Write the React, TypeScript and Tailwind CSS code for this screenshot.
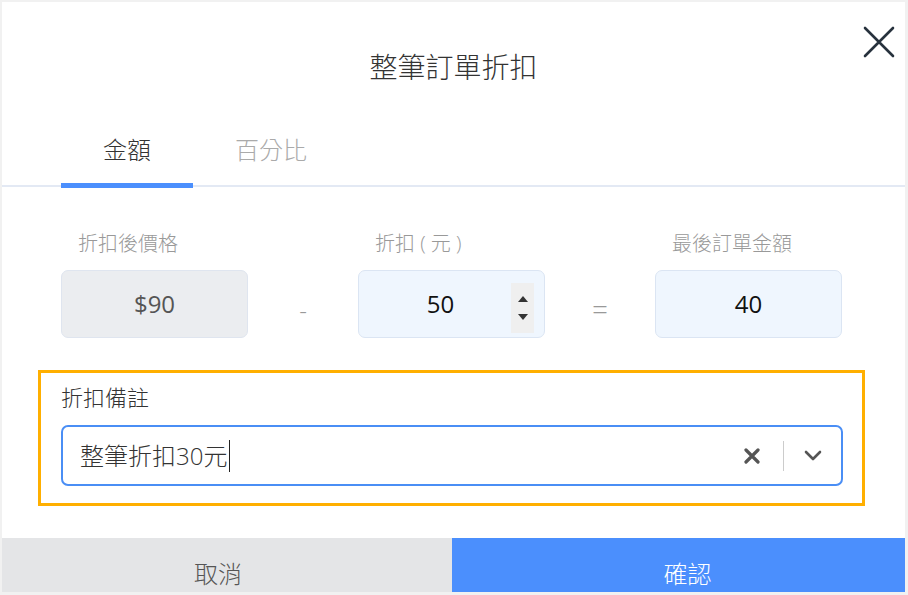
import React from "react";

const font = { fontFamily: "'Open Sans', 'Noto Sans CJK TC', sans-serif" };

const CloseIcon = () => (
  <svg width="32" height="32" viewBox="0 0 32 32" fill="none">
    <path d="M2 2 L30 30 M30 2 L2 30" stroke="#27323d" strokeWidth="2.6" strokeLinecap="round" />
  </svg>
);

const Spinner = () => (
  <div className="absolute right-[10px] top-[12px] bottom-[4px] w-[23px] bg-[#efefef] flex flex-col items-center justify-center gap-[12px]">
    <svg width="10" height="6" viewBox="0 0 10 6"><path d="M5 0 L10 6 L0 6 Z" fill="#333" /></svg>
    <svg width="10" height="6" viewBox="0 0 10 6"><path d="M0 0 L10 0 L5 6 Z" fill="#333" /></svg>
  </div>
);

export default function App() {
  return (
    <div className="w-[908px] h-[595px] bg-[#f1f1f1] pl-[2px] pt-[2px] pr-[3px] pb-[3px] overflow-hidden font-light" style={font}>
      <div className="relative bg-white h-full flex flex-col overflow-hidden">
        <button className="absolute right-[10px] top-[24px]">
          <CloseIcon />
        </button>

        <h1 className="mt-[47px] text-center text-[28px] leading-[36px] text-[#333] font-light">整筆訂單折扣</h1>

        {/* tabs */}
        <div className="mt-[38px] flex border-b-2 border-[#e3e9f4] pl-[59px]">
          <div className="relative px-[42px] pt-[11px] pb-[19px] text-[24px] leading-[32px] text-[#333]">
            金額
            <span className="absolute left-0 right-0 bottom-[-3px] h-[5px] bg-[#4b8ffd]"></span>
          </div>
          <div className="px-[42px] pt-[11px] pb-[19px] text-[24px] leading-[32px] text-[#aaa]">百分比</div>
        </div>

        <div className="pl-[59px] pr-[62px]">
          {/* amounts */}
          <div className="mt-[45px] flex items-start">
            <div className="w-[187px]">
              <div className="pl-[17px] text-[20px] leading-[24px] text-[#999]">折扣後價格</div>
              <div className="mt-[14px] h-[68px] rounded-[7px] border border-[#dfe5ef] bg-[#ebedf0] flex items-center justify-center text-[24px] text-[#555] font-normal">
                $90
              </div>
            </div>
            <div className="w-[110px] h-[106px] flex items-end justify-center pb-[10px] text-[24px] text-[#999]">-</div>
            <div className="w-[187px]">
              <div className="pl-[17px] text-[20px] leading-[24px] text-[#999]">折扣 ( 元 )</div>
              <div className="relative mt-[14px] h-[68px] rounded-[7px] border border-[#dbe5f3] bg-[#eff6fe] flex items-center justify-center pr-[22px] text-[24px] text-[#111] font-normal">
                50
                <Spinner />
              </div>
            </div>
            <div className="w-[110px] h-[106px] flex items-end justify-center pb-[8px] text-[28px] text-[#999]">=</div>
            <div className="w-[187px]">
              <div className="pl-[17px] text-[20px] leading-[24px] text-[#999]">最後訂單金額</div>
              <div className="mt-[14px] h-[68px] rounded-[7px] border border-[#dbe5f3] bg-[#eff6fe] flex items-center justify-center text-[24px] text-[#111] font-normal">
                40
              </div>
            </div>
          </div>

          {/* note */}
          <div className="mt-[32px] ml-[-23px] w-[827px] border-[3px] border-[#ffaf00] pt-[10px] pb-[17px] pl-[20px] pr-[19px]">
            <div className="text-[22px] leading-[28px] text-[#333]">折扣備註</div>
            <div className="mt-[14px] h-[61px] rounded-[7px] border-2 border-[#4a8ef5] flex items-center pl-[17px] pr-[19px]">
              <span className="text-[24px] text-[#333]">整筆折扣30元</span>
              <span className="ml-[2px] w-[1px] h-[32px] bg-[#222]"></span>
              <div className="ml-auto flex items-center">
                <svg width="16" height="16" viewBox="0 0 16 16">
                  <path d="M2 2 L14 14 M14 2 L2 14" stroke="#555" strokeWidth="3.2" strokeLinecap="round" />
                </svg>
                <span className="ml-[23px] mr-[20px] w-[1px] h-[30px] bg-[#ccc]"></span>
                <svg width="18" height="11" viewBox="0 0 18 11">
                  <path d="M2 2 L9 9 L16 2" stroke="#555" strokeWidth="2.6" fill="none" strokeLinecap="round" strokeLinejoin="round" />
                </svg>
              </div>
            </div>
          </div>
        </div>

        {/* footer */}
        <div className="mt-[32px] flex h-[60px]">
          <button className="w-[450px] bg-[#e4e5e7] text-[24px] leading-[32px] text-[#555] pt-[20px] pr-[18px] flex justify-center items-start">取消</button>
          <button className="flex-1 bg-[#4b8ffd] text-[24px] leading-[32px] text-white pt-[20px] pl-[18px] flex justify-center items-start">確認</button>
        </div>
      </div>
    </div>
  );
}
